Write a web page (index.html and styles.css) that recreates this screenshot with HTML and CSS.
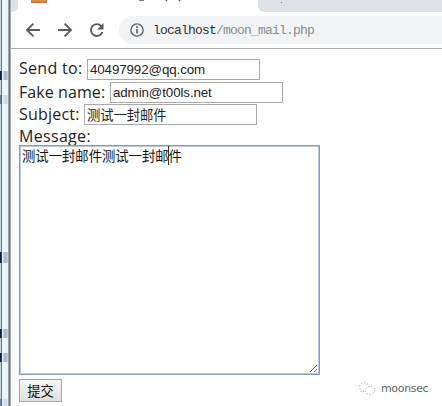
FILE: index.html
```html
<!DOCTYPE html>
<html lang="zh-CN">
<head>
<meta charset="utf-8">
<title>moon mail</title>
<link rel="stylesheet" href="styles.css">
</head>
<body>
<div class="desktop">
  <div class="edge"><i class="m1"></i><i class="m2"></i><i class="m3"></i><i class="m4"></i><i class="m5"></i><i class="m6"></i></div>
  <div class="frame"></div>
  <main class="browser">
    <div class="tabs">
      <div class="tab-left"></div>
      <div class="tab-active">
        <span class="favicon"></span>
        <svg class="title-tails" width="60" height="4" viewBox="0 0 60 4"><path d="M1 0h5M29 0l-1 1M42 0l-1 1" fill="none" stroke="#555" stroke-width="1.5"/></svg>
      </div>
      <div class="tab-right"><svg width="8" height="3" viewBox="0 0 8 3"><path d="M2 0l-1 1" fill="none" stroke="#777"/></svg></div>
    </div>
    <div class="toolbar">
      <svg class="nav" width="84" height="20" viewBox="0 0 84 20" fill="none" stroke="#5a5c5f" stroke-width="1.9">
        <path d="M15 10H2M8.4 3.6L2 10l6.4 6.4"/>
        <path d="M33 10h13M39.6 3.6L46 10l-6.4 6.4"/>
        <path d="M76.3 6.2A5.9 5.9 0 1 0 77.4 12"/>
        <path d="M78.5 3v6.4h-6.4z" fill="#5a5c5f" stroke="none"/>
      </svg>
      <div class="address">
        <svg width="14" height="14" viewBox="0 0 14 14"><circle cx="7" cy="7" r="6.1" fill="none" stroke="#5f6368" stroke-width="1.4"/><path d="M7 6v4.6M7 3.3v1.6" stroke="#5f6368" stroke-width="1.7"/></svg>
        <span class="url"><b>localhost</b>/moon_mail.php</span>
      </div>
    </div>
    <form class="form">
      <div class="row first"><span class="label send">Send to:</span><input value="40497992@qq.com"></div>
      <div class="row second"><span class="label fake">Fake name:</span><input value="admin@t00ls.net"></div>
      <div class="row third"><span class="label subject">Subject:</span><input value="测试一封邮件"></div>
      <div class="row fourth"><span class="label message">Message:</span></div>
      <div class="area"><span>测试一封邮件测试一封邮</span><span class="last">件</span>
        <svg class="grip" width="9" height="9" viewBox="0 0 9 9"><path d="M1 8l7-7M5 8l3-3" stroke="#666" fill="none"/></svg>
      </div>
      <button type="button">提交</button>
    </form>
    <div class="watermark">
      <svg width="18" height="14" viewBox="0 0 18 14" fill="none" stroke="#9a9a9a" stroke-width=".9" stroke-dasharray="1.2 1.8"><path d="M6 9L3 10V8A4.8 4.2 0 1 1 11 4"/><ellipse cx="12" cy="8.5" rx="4.7" ry="4"/></svg>
      <span>moonsec</span>
    </div>
  </main>
</div>
</body>
</html>
```
FILE: styles.css
```css
* { box-sizing: border-box; }
body { margin: 0; overflow: hidden; background: #fff; }
.desktop { display: flex; width: 442px; height: 406px; }
.edge { position: relative; width: 8px; background: linear-gradient(90deg, #c5d5df 0 1px, #657783 1px 2px, #e9f6fd 2px); }
.edge i { position: absolute; left: 0; width: 8px; height: 9px; background: linear-gradient(90deg, #101d40 0 1px, #26385c 1px 2px, #e0edf8 2px 3px, #a9b9d0 4px 7px, #dce8f4); }
.edge .m1 { top: 71px; }
.edge .m2 { top: 95px; opacity: .45; }
.edge .m3 { top: 252px; height: 11px; }
.edge .m4 { top: 329px; }
.edge .m5 { top: 353px; }
.edge .m6 { top: 399px; height: 7px; opacity: .4; }
.frame { width: 3px; background: linear-gradient(90deg, #a0a5a9 0 1px, #70767b 1px 2px, #a2a8ac 2px); }
.browser { position: relative; width: 431px; background: #fff; }
.tabs { display: flex; height: 12px; background: #fff; }
.tab-left { width: 7px; background: #dee1e6; border-bottom-right-radius: 6px; }
.tab-active { display: flex; width: 240px; }
.favicon { width: 16px; height: 3px; margin-left: 13px; background: #e2884c; border-bottom: 1px solid #bd6b36; }
.title-tails { margin-left: 91px; }
.tab-right { flex: 1; padding-left: 22px; background: #dee1e6; border-bottom-left-radius: 6px; line-height: 0; }
.toolbar { display: flex; height: 37px; border-bottom: 1px solid #aaabad; padding-top: 4px; }
.nav { margin: 4px 0 0 14px; }
.address { display: flex; align-items: center; flex: 1; height: 28px; margin-left: 10px; padding-left: 11px; border-radius: 14px 0 0 14px; background: #f1f3f4; }
.url { margin-left: 9px; color: #8a8c8f; font: 13px/18px "Liberation Mono", monospace; letter-spacing: -.8px; padding-top: 1px; white-space: nowrap; }
.url b { font-weight: 400; color: #303236; }
.form { padding: 10px 0 0 8px; }
.row { display: flex; height: 22px; }
.row.first { height: 23px; }
.label { flex: none; color: #222; font: 16px/20px "Open Sans", "Noto Sans", sans-serif; white-space: nowrap; }
.send { width: 68px; letter-spacing: .3px; margin-top: -1px; }
.fake { width: 91px; letter-spacing: .08px; }
.subject { width: 65px; letter-spacing: .2px; }
.message { letter-spacing: .32px; }
.fourth { height: 20px; }
input { width: 173px; height: 21px; border: 1px solid #a9a9a9; padding: 1px 2px; background: #fff; color: #222; font: 13.33px/17px "Liberation Sans", "Noto Sans CJK SC", sans-serif; letter-spacing: -.1px; outline: none; }
.area { position: relative; width: 301px; height: 230px; margin-top: -1px; border: 1px solid #829bbd; box-shadow: inset 0 0 0 1px #b9c9dd; padding: 1px 2px; color: #111; font: 13.33px/18px "Noto Sans CJK SC", sans-serif; white-space: nowrap; }
.last { box-shadow: -1px 0 #333; }
.grip { position: absolute; right: 1px; bottom: 1px; }
button { display: block; width: 43px; height: 23px; margin-top: 4px; padding: 0; border: 1px solid #a6a6a6; background: linear-gradient(#f7f7f7, #dedede); color: #111; font: 13.33px/19px "Noto Sans CJK SC", sans-serif; }
.watermark { position: absolute; left: 347px; top: 382px; display: flex; align-items: center; gap: 5px; color: #666; font: 11px/14px "DejaVu Sans", sans-serif; letter-spacing: -.35px; }
```
